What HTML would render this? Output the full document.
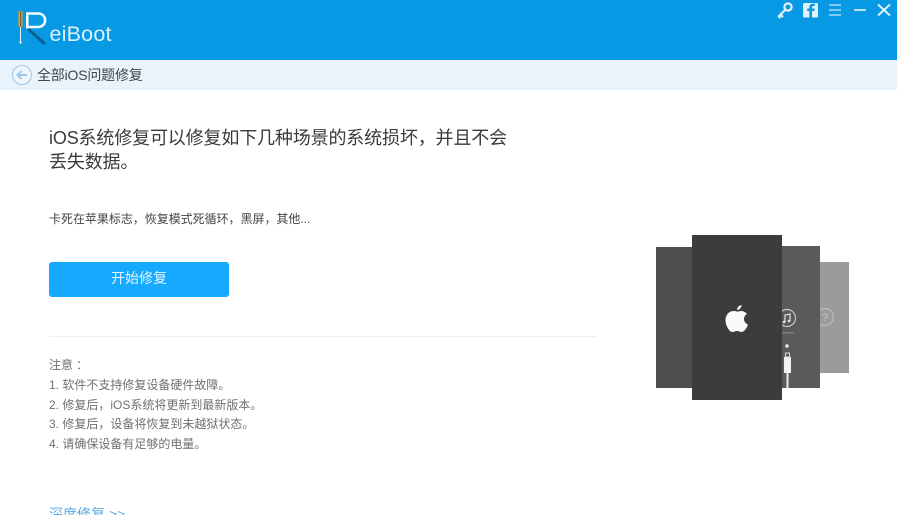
<!DOCTYPE html>
<html lang="zh-CN">
<head>
<meta charset="utf-8">
<style>
html,body{margin:0;padding:0;background:#fff;width:897px;height:515px;overflow:hidden}
#w{position:relative;width:897px;height:515px;overflow:hidden;font-family:"Liberation Sans","Noto Sans CJK SC",sans-serif}
.a{position:absolute;white-space:nowrap;line-height:1}
.b{position:absolute}
</style>
</head>
<body>
<div id="w">
<div class="b" style="left:0;top:0;width:897px;height:60px;background:#0799e3"></div>
<div class="b" style="left:0;top:60px;width:897px;height:30px;background:#e9f3fb"></div>

<svg class="b" style="left:0;top:0" width="130" height="60" viewBox="0 0 130 60">
<rect x="18.500" y="11" width="4" height="16" fill="#f39a2a"/>
<rect x="20" y="11" width="1.200" height="16" fill="#8a5a18"/>
<path d="M20.500 27V43" stroke="#e8f6fd" stroke-width="1"/>
<path d="M19 41.500L20.500 44.500L22 41.500Z" fill="#e8f6fd"/>
<path d="M28 29L45 44" stroke="#0a5f92" stroke-width="3"/>
<path d="M26 13.500H38C47.500 13.500 47.500 27 38 27H27" fill="none" stroke="#f2fafe" stroke-width="2.600"/>
<path d="M27.300 12.500V28.500" stroke="#f2fafe" stroke-width="2.600"/>
<text x="49.500" y="41" font-family="Liberation Sans" font-size="21.500" letter-spacing="0.200" fill="#d9f1fc">eiBoot</text>
</svg>

<svg class="b" style="left:776px;top:0" width="121" height="22" viewBox="0 0 121 22">
<g fill="none" stroke="#e0f3fc">
<circle cx="12" cy="7" r="3.600" stroke-width="2.200"/>
<path d="M9 10L2 17M4.500 14.500L7 17M2.500 16L4.500 18" stroke-width="2.200"/>
<path d="M53 5H65M53 10H65M53 15H65" stroke-width="1.500" stroke="#a9dcf7"/>
<path d="M78 10H90" stroke-width="1.800" stroke="#cdebfa"/>
<path d="M102 4.500L114 15.500M114 4.500L102 15.500" stroke-width="1.900"/>
</g>
<rect x="27" y="3" width="15" height="14.500" rx="1.500" fill="#e0f3fc"/>
<path d="M36 17.500V11H38.300L38.700 8.500H36V7.300C36 6.500 36.300 6 37.300 6H38.800V3.800C38 3.700 37.300 3.700 36.700 3.700C34.700 3.700 33.400 4.900 33.400 7V8.500H31.200V11H33.400V17.500Z" fill="#0799e3"/>
</svg>

<svg class="b" style="left:11px;top:64px" width="22" height="22" viewBox="0 0 22 22">
<circle cx="11" cy="11" r="9.500" fill="#eef6fc" stroke="#9cc7ec" stroke-width="1"/>
<path d="M16 11H7M10.500 7L6.500 11L10.500 15" fill="none" stroke="#9cc7ec" stroke-width="2"/>
</svg>
<div class="a" style="left:37px;top:68px;font-size:14px;color:#444;letter-spacing:-0.200px">全部iOS问题修复</div>

<div class="a" style="left:49px;top:127px;font-size:18px;line-height:23.500px;color:#3a3a3a;letter-spacing:-0.150px">iOS系统修复可以修复如下几种场景的系统损坏，并且不会<br>丢失数据。</div>

<div class="a" style="left:49px;top:213px;font-size:12px;color:#444;letter-spacing:-0.030px">卡死在苹果标志，恢复模式死循环，黑屏，其他...</div>

<div class="b" style="left:49px;top:262px;width:180px;height:35px;background:#15a9ff;border-radius:3px"></div>
<div class="a" style="left:49px;top:271px;width:180px;text-align:center;font-size:14px;color:#e6f6ff">开始修复</div>

<div class="b" style="left:49px;top:336px;width:547px;height:1px;background:#eeeeee"></div>

<div class="a" style="left:49px;top:359px;font-size:12px;color:#707070">注意<span style="position:relative;left:3px">：</span></div>
<div class="a" style="left:49px;top:379px;font-size:12px;color:#707070">1. 软件不支持修复设备硬件故障。</div>
<div class="a" style="left:49px;top:399px;font-size:12px;color:#707070">2. 修复后，iOS系统将更新到最新版本。</div>
<div class="a" style="left:49px;top:418px;font-size:12px;color:#707070">3. 修复后，设备将恢复到未越狱状态。</div>
<div class="a" style="left:49px;top:438px;font-size:12px;color:#707070">4. 请确保设备有足够的电量。</div>

<div class="a" style="left:49px;top:507px;font-size:14px;color:#5aa9e0">深度修复 &gt;&gt;</div>

<svg class="b" style="left:650px;top:230px" width="205" height="175" viewBox="0 0 205 175">
<rect x="170" y="32" width="29" height="111" fill="#9b9b9b"/>
<circle cx="175" cy="87" r="8.500" fill="none" stroke="#bdbdbd" stroke-width="1.200"/>
<text x="175" y="91" font-family="Liberation Sans" font-size="11" fill="#c4c4c4" text-anchor="middle">?</text>
<rect x="128" y="16" width="42" height="142" fill="#5a5a5a"/>
<circle cx="137" cy="88" r="8.500" fill="none" stroke="#c8c8c8" stroke-width="1.200"/>
<path d="M135 92V85L140 84V91" fill="none" stroke="#e0e0e0" stroke-width="1.200"/>
<circle cx="134" cy="92" r="1.300" fill="#e0e0e0"/><circle cx="139" cy="91" r="1.300" fill="#e0e0e0"/>
<rect x="131" y="102" width="13" height="1.500" fill="#7c7c7c"/>
<circle cx="137" cy="116" r="1.700" fill="#eee"/>
<rect x="134" y="127" width="7" height="16" fill="#f2f2f2"/>
<rect x="135.500" y="123" width="4" height="4" fill="none" stroke="#ddd" stroke-width="1"/>
<rect x="136.500" y="143" width="2" height="16" fill="#eee"/>
<rect x="6" y="17" width="40" height="141" fill="#4f4f4f"/>
<rect x="42" y="5" width="90" height="165" fill="#3c3c3c"/>
<g transform="translate(0,-10)">
<path d="M87 91.500C84.500 90.500 81 91 79 92.500C77 94 75.500 97 75.500 100C75.500 105 79 112 82.500 112C84 112 85 111 87 111C89 111 90 112 91.500 112C94.500 112 97 107.500 98 104.500C95.500 103.500 94 101.500 94 99C94 96.800 95.200 95 97 94C95.500 92 93 91 91 91C89.500 91 88 92 87 91.500Z" fill="#fafafa"/>
<path d="M87 90C87 87.500 89 85.500 91.500 85C91.500 87.500 89.500 90 87 90Z" fill="#fafafa"/>
</g>
</svg>
</div>
</body>
</html>
